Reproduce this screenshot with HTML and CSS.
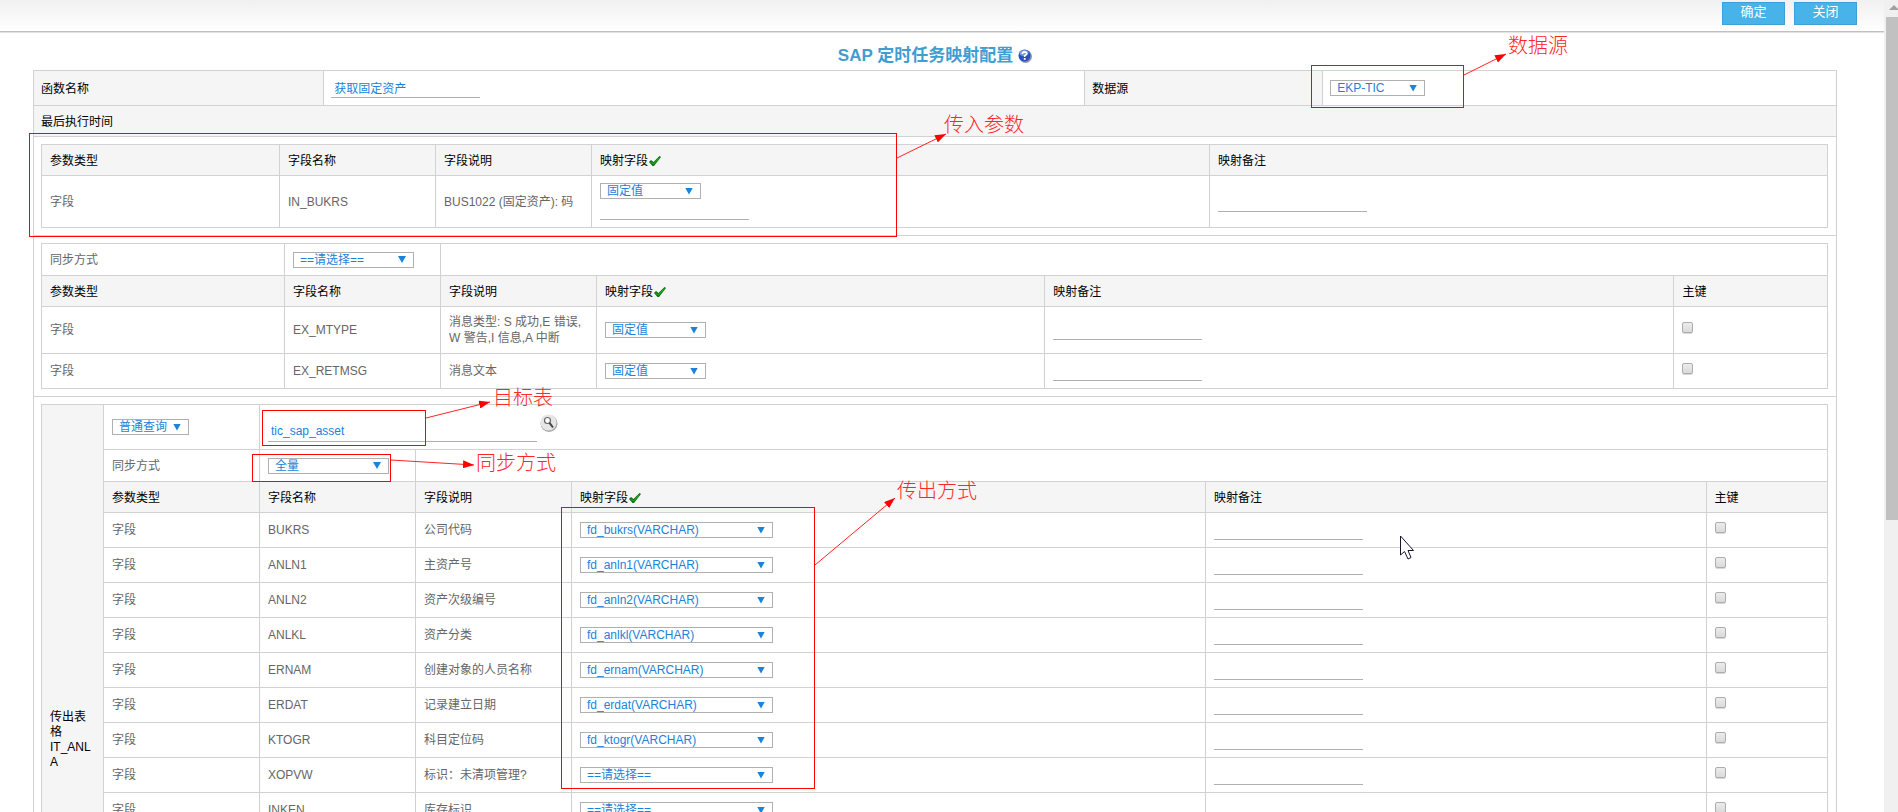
FILE: index.html
```html
<!DOCTYPE html>
<html lang="zh-CN">
<head>
<meta charset="utf-8">
<title>SAP 定时任务映射配置</title>
<link rel="stylesheet" href="styles.css">
</head>
<body>
<svg class="defs" aria-hidden="true">
  <symbol id="tick" viewBox="0 0 12 10"><path d="M0 6 L2 4 L4.500 6 L10.500 0 L12 1 L5 10 L3.500 10 Z" fill="#0b6d0b"/><path d="M1.500 6 L4.500 8 L10.500 1.500" fill="none" stroke="#1fa81f" stroke-width="1.200"/></symbol>
</svg>
<div class="screen">
<div class="page">
  <header class="toolbar">
    <button type="button" class="btn">确定</button>
    <button type="button" class="btn">关闭</button>
  </header>
  <main class="content">
    <h1 class="title">SAP 定时任务映射配置
      <svg class="help" viewBox="0 0 14 14" role="img" aria-label="帮助"><circle cx="7.500" cy="7.500" r="6.500" fill="#8e94a6"/><circle cx="6.500" cy="6.500" r="6" fill="#2a50c0"/><ellipse cx="6" cy="4" rx="4.500" ry="3" fill="#7f9be6"/><path d="M4.300 5 Q4.500 2.800 6.600 2.800 Q8.800 3 8.600 4.900 Q8.300 6 6.700 6.800 V8" fill="none" stroke="#fff" stroke-width="1.700"/><rect x="5.800" y="9" width="1.800" height="1.800" fill="#fff"/></svg>
    </h1>
    <table class="form">
      <colgroup><col class="f1"><col class="f2"><col class="f3"><col></colgroup>
      <tr class="r-field">
        <th><label for="fn">函数名称</label></th>
        <td><input id="fn" class="line fn" type="text" value="获取固定资产"></td>
        <th><label for="ds">数据源</label></th>
        <td><span class="pick w-ds"><select id="ds"><option>EKP-TIC</option></select></span></td>
      </tr>
      <tr class="r-head"><th colspan="4">最后执行时间</th></tr>
      <tr><td colspan="4" class="holder">
        <table class="grid">
          <colgroup><col class="a1"><col class="name"><col class="name"><col><col></colgroup>
          <tr class="r-head"><th>参数类型</th><th>字段名称</th><th>字段说明</th><th>映射字段<svg class="tick" aria-hidden="true"><use href="#tick"/></svg></th><th>映射备注</th></tr>
          <tr class="r-in"><td>字段</td><td>IN_BUKRS</td><td>BUS1022 (固定资产): 码</td>
            <td><div class="stack"><span class="pick w-fix"><select aria-label="映射字段"><option>固定值</option></select></span><input class="line" type="text" aria-label="固定值"></div></td>
            <td><input class="line" type="text" aria-label="映射备注"></td></tr>
        </table>
      </td></tr>
      <tr><td colspan="4" class="holder">
        <table class="grid">
          <colgroup><col class="b1"><col class="name"><col class="name"><col class="b4"><col><col class="b6"></colgroup>
          <tr class="r-sync"><td>同步方式</td><td><span class="pick w-sync"><select aria-label="同步方式"><option>==请选择==</option></select></span></td><td colspan="4"></td></tr>
          <tr class="r-head"><th>参数类型</th><th>字段名称</th><th>字段说明</th><th>映射字段<svg class="tick" aria-hidden="true"><use href="#tick"/></svg></th><th>映射备注</th><th>主键</th></tr>
          <tr class="r-tall"><td>字段</td><td>EX_MTYPE</td><td>消息类型: S 成功,E 错误,<br>W 警告,I 信息,A 中断</td><td><span class="pick w-fix"><select aria-label="映射字段"><option>固定值</option></select></span></td><td><input class="line" type="text" aria-label="映射备注"></td><td><input class="key" type="checkbox" aria-label="主键"></td></tr>
          <tr class="r-field"><td>字段</td><td>EX_RETMSG</td><td>消息文本</td><td><span class="pick w-fix"><select aria-label="映射字段"><option>固定值</option></select></span></td><td><input class="line" type="text" aria-label="映射备注"></td><td><input class="key" type="checkbox" aria-label="主键"></td></tr>
        </table>
      </td></tr>
      <tr><td colspan="4" class="holder">
        <table class="grid">
          <colgroup><col class="c1"><col class="name"><col class="name"><col class="name"><col class="c5"><col><col class="c7"></colgroup>
          <tr class="r-target"><th rowspan="13" class="side">传出表格<br>IT_ANLA</th><td><span class="pick w-query"><select aria-label="查询方式"><option>普通查询</option></select></span></td>
            <td colspan="5"><div class="lookup"><input class="line target" type="text" aria-label="目标表" value="tic_sap_asset"><button type="button" class="find" aria-label="选择"><svg viewBox="0 0 18 18" aria-hidden="true"><circle cx="9" cy="9.500" r="8.500" fill="#a9a9a9"/><circle cx="8.500" cy="8.500" r="8" fill="#e6e6e6"/><circle cx="7.500" cy="6.500" r="3" fill="#fff" stroke="#666" stroke-width="1.200"/><path d="M9.500 8.800 L13 13.500" stroke="#444" stroke-width="2"/></svg></button></div></td></tr>
          <tr class="r-sync"><td>同步方式</td><td><span class="pick w-sync"><select aria-label="同步方式"><option>全量</option></select></span></td><td colspan="4"></td></tr>
          <tr class="r-head"><th>参数类型</th><th>字段名称</th><th>字段说明</th><th>映射字段<svg class="tick" aria-hidden="true"><use href="#tick"/></svg></th><th>映射备注</th><th>主键</th></tr>
          <tr class="r-field"><td>字段</td><td>BUKRS</td><td>公司代码</td><td><span class="pick w-map"><select aria-label="映射字段"><option>fd_bukrs(VARCHAR)</option></select></span></td><td><input class="line" type="text" aria-label="映射备注"></td><td><input class="key" type="checkbox" aria-label="主键"></td></tr>
          <tr class="r-field"><td>字段</td><td>ANLN1</td><td>主资产号</td><td><span class="pick w-map"><select aria-label="映射字段"><option>fd_anln1(VARCHAR)</option></select></span></td><td><input class="line" type="text" aria-label="映射备注"></td><td><input class="key" type="checkbox" aria-label="主键"></td></tr>
          <tr class="r-field"><td>字段</td><td>ANLN2</td><td>资产次级编号</td><td><span class="pick w-map"><select aria-label="映射字段"><option>fd_anln2(VARCHAR)</option></select></span></td><td><input class="line" type="text" aria-label="映射备注"></td><td><input class="key" type="checkbox" aria-label="主键"></td></tr>
          <tr class="r-field"><td>字段</td><td>ANLKL</td><td>资产分类</td><td><span class="pick w-map"><select aria-label="映射字段"><option>fd_anlkl(VARCHAR)</option></select></span></td><td><input class="line" type="text" aria-label="映射备注"></td><td><input class="key" type="checkbox" aria-label="主键"></td></tr>
          <tr class="r-field"><td>字段</td><td>ERNAM</td><td>创建对象的人员名称</td><td><span class="pick w-map"><select aria-label="映射字段"><option>fd_ernam(VARCHAR)</option></select></span></td><td><input class="line" type="text" aria-label="映射备注"></td><td><input class="key" type="checkbox" aria-label="主键"></td></tr>
          <tr class="r-field"><td>字段</td><td>ERDAT</td><td>记录建立日期</td><td><span class="pick w-map"><select aria-label="映射字段"><option>fd_erdat(VARCHAR)</option></select></span></td><td><input class="line" type="text" aria-label="映射备注"></td><td><input class="key" type="checkbox" aria-label="主键"></td></tr>
          <tr class="r-field"><td>字段</td><td>KTOGR</td><td>科目定位码</td><td><span class="pick w-map"><select aria-label="映射字段"><option>fd_ktogr(VARCHAR)</option></select></span></td><td><input class="line" type="text" aria-label="映射备注"></td><td><input class="key" type="checkbox" aria-label="主键"></td></tr>
          <tr class="r-field"><td>字段</td><td>XOPVW</td><td>标识：未清项管理?</td><td><span class="pick w-map"><select aria-label="映射字段"><option>==请选择==</option></select></span></td><td><input class="line" type="text" aria-label="映射备注"></td><td><input class="key" type="checkbox" aria-label="主键"></td></tr>
          <tr class="r-field"><td>字段</td><td>INKEN</td><td>库存标识</td><td><span class="pick w-map"><select aria-label="映射字段"><option>==请选择==</option></select></span></td><td><input class="line" type="text" aria-label="映射备注"></td><td><input class="key" type="checkbox" aria-label="主键"></td></tr>
          <tr class="r-rest"><td colspan="6"></td></tr>
        </table>
      </td></tr>
    </table>
  </main>
</div>
<div class="scrollbar" aria-hidden="true"><div class="up"></div><div class="thumb"></div></div>
</div>
<svg class="notes" width="1898" height="812">
  <defs><marker id="head" viewBox="0 0 11 8" refX="11" refY="4" markerWidth="11" markerHeight="8" markerUnits="userSpaceOnUse" orient="auto"><path d="M0 0 L11 4 L0 8 Z" fill="#f00"/></marker></defs>
  <g class="boxes">
    <rect x="29.500" y="133.500" width="867" height="103"/>
    <rect x="1311.500" y="65.500" width="152" height="42"/>
    <rect x="262.500" y="410.500" width="163" height="35"/>
    <rect x="252.500" y="454.500" width="138" height="27"/>
    <rect x="561.500" y="507.500" width="253" height="281"/>
  </g>
  <g class="arrows">
    <path d="M897 158 L946 134"/><path d="M1464 75 L1506 54"/><path d="M426 418 L490 402"/><path d="M391 460 L474 465"/><path d="M815 565 L895 498"/>
  </g>
  <g class="labels">
    <text x="944" y="132">传入参数</text><text x="1508" y="53">数据源</text><text x="493" y="405">目标表</text><text x="476" y="470">同步方式</text><text x="897" y="498">传出方式</text>
  </g>
  <path d="M1400.500 536 V555 L1404.500 551.500 L1408 559 L1411 557.500 L1408 550.500 H1413.500 Z" fill="#fff" stroke="#16162a"/>
</svg>
</body>
</html>
```

FILE: styles.css
```css
* { box-sizing: border-box; }

body {
  margin: 0;
  overflow: hidden;
  background: #fff;
  color: #000;
  font: 12px/16px "Liberation Sans", "Noto Sans CJK SC", sans-serif;
}

.defs { position: absolute; width: 0; height: 0; }

.screen { display: flex; height: 100vh; }
.page { flex: 1; min-width: 0; overflow: hidden; }

.toolbar {
  display: flex;
  justify-content: flex-end;
  gap: 9px;
  height: 32px;
  padding: 2px 27px 0 0;
  background: linear-gradient(#f0f0f0, #fff);
  border-bottom: 1px solid #c0c0c0;
  box-shadow: 0 1px 1px #e4e4e4;
}

.btn {
  width: 63px;
  height: 23px;
  padding: 0 0 3px;
  border: 1px solid #3aa0d8;
  background: #47b3e8;
  color: #fff;
  font: inherit;
  font-size: 13px;
}

.content { padding: 12px 47px 0 33px; }

.title {
  display: flex;
  justify-content: center;
  align-items: center;
  gap: 5px;
  margin: 0 0 3px;
  color: #3f9dd0;
  font-size: 17px;
  line-height: 23px;
}

.help { width: 14px; height: 14px; }

table {
  width: 100%;
  border-collapse: collapse;
  table-layout: fixed;
}

th, td {
  border: 1px solid #d2d2d2;
  text-align: left;
  vertical-align: middle;
}

th { background: #f5f5f5; font-weight: normal; }

.form > tbody > tr > th { padding: 2px 7px 0; }
.form > tbody > tr > td { padding: 0 7px; }
.form > tbody > tr > .holder { padding: 7px 8px 7px 7px; }
.grid th { padding: 2px 8px 0; }
.grid td { padding: 0 8px; }
.grid td { color: #666; }

.f1 { width: 16.100%; }
.f2 { width: 42.200%; }
.f3 { width: 13.200%; }
.a1 { width: 238px; }
.b1 { width: 243px; }
.name { width: 156px; }
.b4 { width: 25.100%; }
.b6 { width: 8.600%; }
.c1 { width: 62px; }
.c5 { width: 35.500%; }
.c7 { width: 6.800%; }

.r-field { height: 35px; }
.r-head { height: 31px; }
.r-in { height: 52px; }
.r-sync { height: 32px; }
.r-tall { height: 47px; }
.r-target { height: 45px; }
.r-rest { height: 245px; }

.grid .side { line-height: 15px; word-break: break-all; }

.tick { width: 12px; height: 10px; margin-left: 1px; vertical-align: -1px; }

.pick { display: grid; align-items: center; height: 16px; }
.pick::after {
  content: "";
  grid-area: 1 / 1;
  justify-self: end;
  width: 8px;
  height: 7px;
  margin-right: 8px;
  background: #1c82da;
  clip-path: polygon(0 0, 100% 0, 50% 100%);
  pointer-events: none;
}
.pick select {
  grid-area: 1 / 1;
  appearance: none;
  width: 100%;
  height: 16px;
  margin: 0;
  padding: 0 16px 0 6px;
  border: 1px solid #b0b0b0;
  border-radius: 0;
  background: #fff;
  color: #1c82da;
  font: inherit;
  line-height: 14px;
}

.w-ds { width: 95px; }
.w-fix { width: 101px; }
.w-sync { width: 121px; }
.w-query { width: 77px; }
.w-map { width: 193px; }

.line {
  display: block;
  width: 149px;
  height: 20px;
  padding: 0 3px 1px;
  border: 0;
  border-bottom: 1px solid #b0b0b0;
  background: none;
  color: #1c82da;
  font: inherit;
}

.stack { display: grid; gap: 1px; }

.lookup { display: flex; align-items: flex-end; gap: 3px; height: 30px; }
.lookup .target { width: 269px; }
.find {
  align-self: flex-start;
  width: 18px;
  height: 18px;
  margin-top: 2px;
  padding: 0;
  border: 0;
  background: none;
}
.find svg { display: block; width: 18px; height: 18px; }

.key {
  appearance: none;
  display: block;
  width: 11px;
  height: 11px;
  margin: 0 0 6px;
  border: 1px solid #adadad;
  border-radius: 2px;
  background: linear-gradient(#ececec, #dadada);
  box-shadow: 0 1px 0 #d8d8d8;
}

.scrollbar { width: 14px; padding-left: 2px; background: #f0f0f0; }
.up {
  width: 10px;
  height: 5px;
  margin: 5px 0 7px 3px;
  background: #a0a0a0;
  clip-path: polygon(50% 0, 100% 100%, 0 100%);
}
.thumb { height: 62vh; background: #c1c1c1; }

.notes { position: absolute; top: 0; left: 0; pointer-events: none; }
.boxes { fill: none; stroke: #f00; stroke-width: 1px; }
.arrows { fill: none; stroke: #f22; stroke-width: 1px; }
.arrows path { marker-end: url(#head); }
.labels {
  fill: #ff2626;
  font: 300 20px "Liberation Serif", "Noto Sans CJK SC", serif;
}
```
